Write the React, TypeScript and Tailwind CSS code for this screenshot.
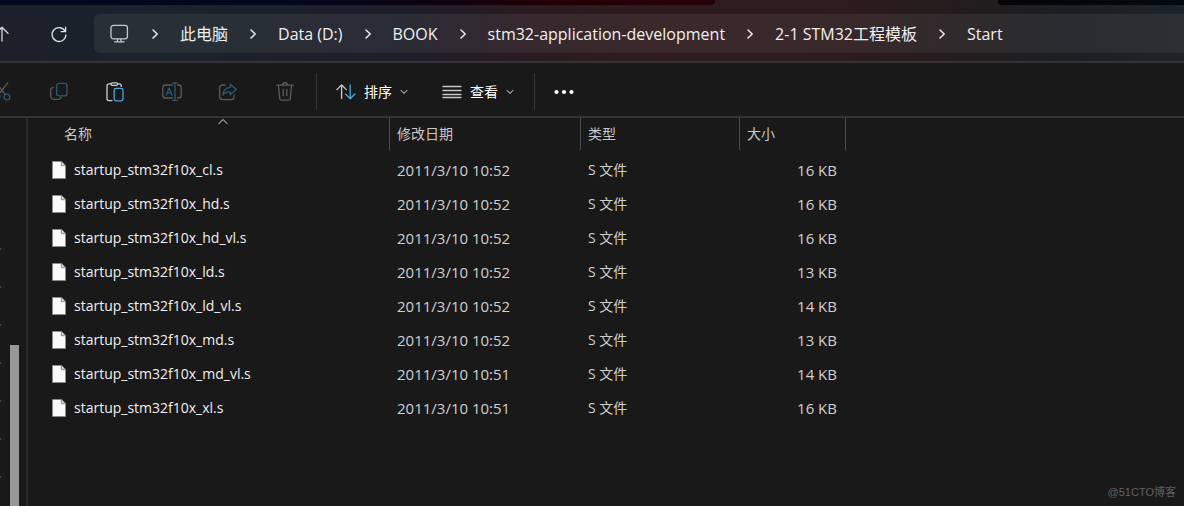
import { Fragment } from "react";
import type { ReactNode } from "react";

const crumbs = ["此电脑", "Data (D:)", "BOOK", "stm32-application-development", "2-1 STM32工程模板", "Start"];

const files = [
  { name: "startup_stm32f10x_cl.s", modified: "2011/3/10 10:52", size: "16 KB" },
  { name: "startup_stm32f10x_hd.s", modified: "2011/3/10 10:52", size: "16 KB" },
  { name: "startup_stm32f10x_hd_vl.s", modified: "2011/3/10 10:52", size: "16 KB" },
  { name: "startup_stm32f10x_ld.s", modified: "2011/3/10 10:52", size: "13 KB" },
  { name: "startup_stm32f10x_ld_vl.s", modified: "2011/3/10 10:52", size: "14 KB" },
  { name: "startup_stm32f10x_md.s", modified: "2011/3/10 10:52", size: "13 KB" },
  { name: "startup_stm32f10x_md_vl.s", modified: "2011/3/10 10:51", size: "14 KB" },
  { name: "startup_stm32f10x_xl.s", modified: "2011/3/10 10:51", size: "16 KB" },
];

function Icon({ children, className = "" }: { children: ReactNode; className?: string }) {
  return (
    <svg
      aria-hidden="true"
      className={`size-5 shrink-0 ${className}`}
      fill="none"
      stroke="currentColor"
      strokeLinecap="round"
      strokeLinejoin="round"
      strokeWidth="1.3"
      viewBox="0 0 20 20"
    >
      {children}
    </svg>
  );
}

function ChevronRight() {
  return (
    <svg aria-hidden="true" className="h-3 w-2 shrink-0" fill="none" stroke="#e8e8e8" strokeLinecap="round" strokeLinejoin="round" strokeWidth="1.6" viewBox="0 0 8 12">
      <path d="M2 2l4.2 4L2 10" />
    </svg>
  );
}

function ChevronDown() {
  return (
    <svg aria-hidden="true" className="size-2 shrink-0" fill="none" stroke="#a0a0a0" strokeLinecap="round" strokeLinejoin="round" strokeWidth="1.1" viewBox="0 0 8 8">
      <path d="M1 2.3l3 3 3-3" />
    </svg>
  );
}

// dimmed icons belong to commands that need a selection
const commands = [
  {
    label: "剪切",
    disabled: true,
    icon: (
      <Icon className="text-[#5c5c5c]">
        <path d="M4.3.8l8.8 11.6M15.7.8L6.9 12.4" />
        <circle cx="5" cy="15" r="2.9" stroke="#2c5a72" />
        <circle cx="15" cy="15" r="2.9" stroke="#2c5a72" />
      </Icon>
    ),
  },
  {
    label: "复制",
    disabled: true,
    icon: (
      <Icon className="text-[#5c5c5c]">
        <path d="M4.2 5.3A3 3 0 0 0 1.7 8.2v5.6a3.6 3.6 0 0 0 3.6 3.6h3.9a3 3 0 0 0 2.8-2" />
        <rect height="12.4" rx="2.6" stroke="#2c5a72" width="10.4" x="7.6" y="1.4" />
      </Icon>
    ),
  },
  {
    label: "粘贴",
    disabled: false,
    icon: (
      <Icon className="text-[#d0d0d0]">
        <path d="M6.2 1.8H4a2 2 0 0 0-2 2v12.8a2 2 0 0 0 2 2h3M12.6 1.8h1.6a2 2 0 0 1 2 2v.6" />
        <rect height="2.6" rx="1.3" width="6.6" x="6" y=".8" />
        <rect height="12.4" rx="1.8" stroke="#4aa8dc" width="8.8" x="9.2" y="6.4" />
      </Icon>
    ),
  },
  {
    label: "重命名",
    disabled: true,
    icon: (
      <Icon className="text-[#5c5c5c]">
        <path d="M10.3 3H3.6A2.8 2.8 0 0 0 .8 5.8v7.4A2.8 2.8 0 0 0 3.6 16h6.7M15.6 3h.8a2.8 2.8 0 0 1 2.8 2.8v7.4a2.8 2.8 0 0 1-2.8 2.8h-.8" />
        <path d="M10.8.8h4.4M10.8 18.4h4.4M13 .8v17.6M4.2 13l2.9-7 2.9 7M5.2 10.8H9" stroke="#2c5a72" />
      </Icon>
    ),
  },
  {
    label: "共享",
    disabled: true,
    icon: (
      <Icon className="text-[#5c5c5c]">
        <path d="M7 3H4.4a2.8 2.8 0 0 0-2.8 2.8v9a2.8 2.8 0 0 0 2.8 2.8h9a2.8 2.8 0 0 0 2.8-2.8v-1.6" />
        <path d="M12.2 2.2l6 5.4-6 5.2V9.9C8.7 9.7 6.6 10.6 5 13c.2-4.600 3-7.200 7.200-7.600z" stroke="#2c5a72" />
      </Icon>
    ),
  },
  {
    label: "删除",
    disabled: true,
    icon: (
      <Icon className="text-[#5c5c5c]">
        <path d="M1.8 3.2h16.4M3.4 3.2l1.3 13.2a2 2 0 0 0 2 1.8h6.6a2 2 0 0 0 2-1.8l1.3-13.2M7.6 3a2.4 2.4 0 0 1 4.8 0M8.2 7.400v6.200M11.8 7.400v6.200" />
      </Icon>
    ),
  },
];

function AddressBar() {
  return (
    <header className="relative flex h-[63px] shrink-0 items-center border-b-2 border-[#333335] bg-[linear-gradient(90deg,#1c202b_0%,#1b232b_14%,#1d1e2a_34%,#2a1b21_44%,#2f1b1d_56%,#2d1b1d_72%,#211d1f_83%,#1b2023_92%,#1d2427_100%)] pt-1.5">
      <div className="absolute left-0 top-0 h-[5px] w-[715px] rounded-br bg-[linear-gradient(90deg,#020820_0%,#04071c_45%,#0c0310_60%,#200006_75%,#260007_100%)]" />
      <div className="absolute left-[998px] right-0 top-0 h-[5px] rounded-bl bg-[linear-gradient(90deg,#070406,#020b10)]" />

      <button aria-label="上移" className="-ml-2 text-[#d8d8d8]" type="button">
        <Icon>
          <path d="M10 17V3.5M4 9.2l6-5.9 6 5.9" />
        </Icon>
      </button>
      <button aria-label="刷新" className="ml-[37px] text-[#e0e0e0]" type="button">
        <Icon>
          <path d="M16.2 7.5A6.9 6.9 0 1 0 16.9 11M16.6 3.2v4.5h-4.5" />
        </Icon>
      </button>

      <nav aria-label="路径" className="ml-[25px] flex h-[39px] flex-1 items-center rounded-l-md bg-white/6 pl-4">
        <Icon className="mr-[21px] text-[#c8c8cc]">
          <rect height="13.4" rx="2.4" width="16.4" x="1" y="1.4" />
          <path d="M7.4 14.8v2.8M11 14.8v2.8M4.6 17.8h9.4" />
        </Icon>
        {crumbs.map((crumb) => (
          <Fragment key={crumb}>
            <ChevronRight />
            <a className="mx-[21px] whitespace-nowrap text-base text-[#f0f0f0]" href="#">
              {crumb}
            </a>
          </Fragment>
        ))}
      </nav>
    </header>
  );
}

function Toolbar() {
  return (
    <div className="flex h-[55px] shrink-0 items-center border-b-2 border-[#333333] pt-1" role="toolbar">
      <div className="-ml-2 flex w-[303px] shrink-0 justify-between">
        {commands.map((command) => (
          <button aria-label={command.label} disabled={command.disabled} key={command.label} type="button">
            {command.icon}
          </button>
        ))}
      </div>
      <div className="ml-[21px] h-[37px] w-px bg-[#383838]" />
      <button className="ml-[19px] flex items-center gap-2 text-sm text-white" type="button">
        <Icon className="text-[#d0d0d0]">
          <path d="M5.6 16.6V3M.9 7.6l4.7-4.7 4.7 4.7" />
          <path d="M14.2 3v13.6M9.5 12l4.7 4.7 4.7-4.7" stroke="#4aa8dc" />
        </Icon>
        排序
        <ChevronDown />
      </button>
      <button className="ml-[34px] flex items-center gap-2 text-sm text-white" type="button">
        <Icon className="text-[#c8c8c8]">
          <path d="M1 4.5h18M1 8.5h18M1 12.5h18M1 15.5h18" />
        </Icon>
        查看
        <ChevronDown />
      </button>
      <div className="ml-5 h-[37px] w-px bg-[#383838]" />
      <button aria-label="更多" className="ml-[19px]" type="button">
        <Icon>
          <g fill="#ffffff" stroke="none">
            <circle cx="2.5" cy="10" r="2.1" />
            <circle cx="10" cy="10" r="2.1" />
            <circle cx="17.5" cy="10" r="2.1" />
          </g>
        </Icon>
      </button>
    </div>
  );
}

function FileIcon() {
  return (
    <svg aria-hidden="true" className="h-[18px] w-[14px] shrink-0" viewBox="0 0 14 18">
      <path d="M.5.5h9l4 4v13H.5z" fill="#fafafa" stroke="#8c8c8c" strokeWidth=".8" />
      <path d="M9.3.5v4.2h4.2" fill="#d4d4d4" stroke="#777777" strokeWidth=".8" />
    </svg>
  );
}

function ColumnHeader({ children, className = "" }: { children: ReactNode; className?: string }) {
  return (
    <th className="relative h-[35px] p-0 text-left align-top font-normal" scope="col">
      <div className={`flex h-8 items-center border-r border-[#4a4a4a] text-sm text-[#c8c8c8] ${className}`}>{children}</div>
    </th>
  );
}

function FileTable() {
  return (
    <table className="w-[818px] table-fixed border-collapse self-start">
      <colgroup>
        <col className="w-[362px]" />
        <col className="w-[191px]" />
        <col className="w-[159px]" />
        <col className="w-[106px]" />
      </colgroup>
      <thead>
        <tr>
          <ColumnHeader className="pl-9">
            名称
            <svg aria-hidden="true" className="absolute left-[189px] top-0 h-2 w-3" fill="none" stroke="#9a9a9a" strokeWidth="1.1" viewBox="0 0 12 8">
              <path d="M1.5 5.8L6 1.600l4.500 4.200" />
            </svg>
          </ColumnHeader>
          <ColumnHeader className="pl-[7px]">修改日期</ColumnHeader>
          <ColumnHeader className="pl-[7px]">类型</ColumnHeader>
          <ColumnHeader className="pl-[7px]">大小</ColumnHeader>
        </tr>
      </thead>
      <tbody className="text-[15px] leading-5 text-[#d0d0d0]">
        {files.map((file) => (
          <tr className="h-[34px]" key={file.name}>
            <td className="p-0 pl-6">
              <div className="flex items-center gap-2 whitespace-nowrap text-sm leading-5 text-[#f0f0f0]">
                <FileIcon />
                {file.name}
              </div>
            </td>
            <td className="p-0 pl-[7px]">{file.modified}</td>
            <td className="p-0 pl-[7px] text-sm leading-5">S 文件</td>
            <td className="p-0 pr-[9px] text-right">{file.size}</td>
          </tr>
        ))}
      </tbody>
    </table>
  );
}

export default function App() {
  return (
    <div className="relative flex h-screen flex-col overflow-hidden bg-[#191919] font-['Open_Sans','Noto_Sans_CJK_SC',sans-serif]">
      <AddressBar />
      <Toolbar />
      <main className="flex min-h-0 flex-1">
        <aside className="flex w-7 shrink-0 justify-between border-r-2 border-[#2b2b2b]">
          <div className="flex flex-col gap-9 pt-[130px]">
            {[0, 1, 2, 3, 4, 5, 6].map((row) => (
              <span className="h-0.5 w-px shrink-0 bg-[#444444]" key={row} />
            ))}
          </div>
          <div className="mr-[7px] mt-[227px] w-[9px] bg-[#989898]" />
        </aside>
        <FileTable />
      </main>
      <p className="absolute bottom-1 right-2 font-['Liberation_Sans','Noto_Sans_CJK_SC',sans-serif] text-[11px] leading-5 text-[#606060]">
        @51CTO博客
      </p>
    </div>
  );
}
